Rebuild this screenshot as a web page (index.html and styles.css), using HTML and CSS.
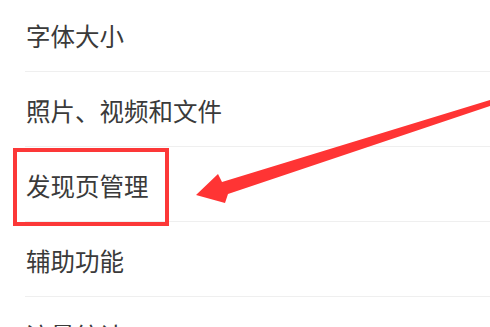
FILE: index.html
```html
<!DOCTYPE html>
<html lang="zh-CN">
<head>
<meta charset="utf-8">
<link rel="stylesheet" href="styles.css">
</head>
<body>
<div class="screen">
  <ul class="list">
    <li class="row"><span class="label">字体大小</span></li>
    <li class="row"><span class="label">照片、视频和文件</span></li>
    <li class="row"><span class="label">发现页管理</span></li>
    <li class="row"><span class="label">辅助功能</span></li>
    <li class="row"><span class="label">流量统计</span></li>
  </ul>
  <div class="highlight"></div>
  <svg class="arrow" width="490" height="327" viewBox="0 0 490 327">
    <polygon points="196,195 218,174 222,182 490,100 490,106 228,194 225,203" fill="#ff3434"/>
  </svg>
</div>
</body>
</html>
```
FILE: styles.css
```css
html, body {
  margin: 0;
  padding: 0;
  background: #ffffff;
}
.screen {
  position: relative;
  width: 490px;
  height: 327px;
  overflow: hidden;
  background: #ffffff;
}
.list {
  list-style: none;
  margin: -3px 0 0 0;
  padding: 0;
}
.row {
  box-sizing: border-box;
  height: 75px;
  margin-left: 25px;
  border-bottom: 1px solid #efefef;
  display: flex;
  align-items: center;
  padding-top: 4px;
}
.label {
  margin-left: 1px;
  font-family: "Noto Sans CJK SC", "Noto Sans", sans-serif;
  font-size: 24.5px;
  line-height: 1;
  color: #3a3a3a;
}
.highlight {
  position: absolute;
  left: 13px;
  top: 148px;
  width: 148px;
  height: 70px;
  border: 4px solid #fc3838;
}
.arrow {
  position: absolute;
  left: 0;
  top: 0;
}
```
